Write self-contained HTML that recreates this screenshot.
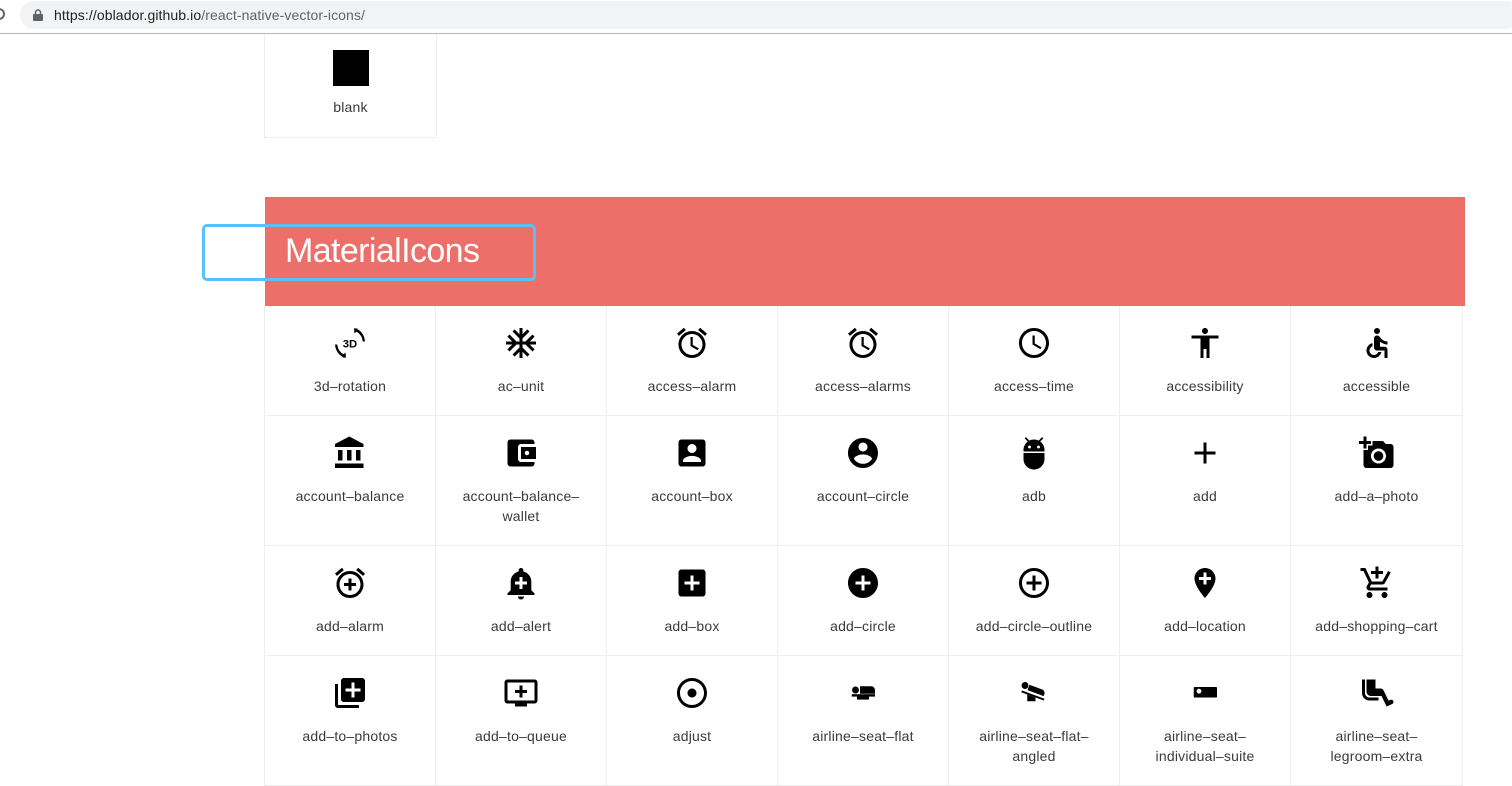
<!DOCTYPE html>
<html><head><meta charset="utf-8"><style>
*{margin:0;padding:0;box-sizing:border-box}
body{width:1512px;height:769px;overflow:hidden;background:#fff;font-family:"Liberation Sans",sans-serif;position:relative}
.bar{position:absolute;left:20px;top:1px;width:1500px;height:28px;background:#f1f3f4;border-radius:14px}
.url{position:absolute;left:54px;top:7px;font-size:14px;color:#202124;letter-spacing:0.1px}
.url span{color:#5f6368}
.line{position:absolute;left:0;top:33px;width:1512px;height:1px;background:#b4b4b4}
.c{position:absolute;border-right:1px solid #eee;border-bottom:1px solid #eee;text-align:center}
.c svg{position:absolute;left:50%;margin-left:-18px;top:19px;width:36px;height:36px}
.c .l{position:absolute;left:0;right:0;top:70px;font-size:14px;letter-spacing:0.2px;line-height:20px;color:#3a3a3a}
.hdr{position:absolute;left:265px;top:197px;width:1200px;height:109px;background:#ec6f6a}
.ttl{position:absolute;left:285px;top:232px;font-size:34px;color:#fff;letter-spacing:-0.6px}
.focus{position:absolute;left:202px;top:224px;width:334px;height:57px;border:3px solid #5bc0f8;border-radius:5px}
</style></head><body>
<div class="bar"></div>
<svg style="position:absolute;left:33px;top:9px" width="10" height="12" viewBox="0 0 10 12"><rect x="0" y="5" width="10" height="7" rx="1" fill="#5f6368"/><path d="M2.5 5V3.5a2.5 2.5 0 0 1 5 0V5" stroke="#5f6368" stroke-width="1.5" fill="none"/></svg>
<div class="url">https://oblador.github.io<span>/react-native-vector-icons/</span></div>
<div style="position:absolute;left:-3px;top:8px;width:8px;height:12px;border:2px solid #5f6368;border-left:none;border-radius:0 6px 6px 0"></div>
<div class="line"></div>

<div class="c" style="left:264px;top:34px;width:173px;height:104px;border-left:1px solid #eee">
<div style="position:absolute;left:68px;top:16px;width:36px;height:36px;background:#000"></div>
<div class="l" style="top:63px">blank</div></div>

<div class="hdr"></div>
<div class="ttl">MaterialIcons</div>
<div class="focus"></div>

<!-- row 1 -->
<div class="c" style="left:264px;top:306px;width:172px;height:110px;border-left:1px solid #eee"><svg viewBox="0 0 24 24"><path d="M7.5 21.5A10 10 0 0 1 2.05 13H3.5a8.5 8.5 0 0 0 4.2 6.6l1.3-1.3.3 3.5-3.5-.3zM16.5 2.5A10 10 0 0 1 21.95 11H20.5a8.5 8.5 0 0 0-4.2-6.6l-1.3 1.3-.3-3.5 3.5.3z" fill="#000"/><text x="12" y="15" font-size="7.5" font-weight="bold" text-anchor="middle" font-family="Liberation Sans">3D</text></svg><div class="l">3d–rotation</div></div>
<div class="c" style="left:436px;top:306px;width:171px;height:110px"><svg viewBox="0 0 24 24"><path d="M22 11h-4.17l3.24-3.24-1.41-1.42L15 11h-2V9l4.66-4.66-1.42-1.41L13 6.17V2h-2v4.17L7.76 2.93 6.34 4.34 11 9v2H9L4.34 6.34 2.93 7.76 6.17 11H2v2h4.17l-3.24 3.24 1.41 1.42L9 13h2v2l-4.66 4.66 1.42 1.41L11 17.83V22h2v-4.17l3.24 3.24 1.42-1.41L13 15v-2h2l4.66 4.66 1.41-1.42L17.83 13H22z"/></svg><div class="l">ac–unit</div></div>
<div class="c" style="left:607px;top:306px;width:171px;height:110px"><svg viewBox="0 0 24 24"><path d="M22 5.72l-4.6-3.86-1.29 1.53 4.6 3.86L22 5.72zM7.88 3.39L6.6 1.86 2 5.71l1.29 1.53 4.59-3.85zM12.5 8H11v6l4.75 2.85.75-1.23-4-2.37V8zM12 4c-4.97 0-9 4.03-9 9s4.02 9 9 9c4.97 0 9-4.03 9-9s-4.03-9-9-9zm0 16c-3.87 0-7-3.13-7-7s3.13-7 7-7 7 3.13 7 7-3.13 7-7 7z"/></svg><div class="l">access–alarm</div></div>
<div class="c" style="left:778px;top:306px;width:171px;height:110px"><svg viewBox="0 0 24 24"><path d="M22 5.72l-4.6-3.86-1.29 1.53 4.6 3.86L22 5.72zM7.88 3.39L6.6 1.86 2 5.71l1.29 1.53 4.59-3.85zM12.5 8H11v6l4.75 2.85.75-1.23-4-2.37V8zM12 4c-4.97 0-9 4.03-9 9s4.02 9 9 9c4.97 0 9-4.03 9-9s-4.03-9-9-9zm0 16c-3.87 0-7-3.13-7-7s3.13-7 7-7 7 3.13 7 7-3.13 7-7 7z"/></svg><div class="l">access–alarms</div></div>
<div class="c" style="left:949px;top:306px;width:171px;height:110px"><svg viewBox="0 0 24 24"><path d="M11.99 2C6.47 2 2 6.48 2 12s4.47 10 9.99 10C17.52 22 22 17.52 22 12S17.52 2 11.99 2zM12 20c-4.42 0-8-3.58-8-8s3.58-8 8-8 8 3.58 8 8-3.58 8-8 8zm.5-13H11v6l5.25 3.15.75-1.23-4.5-2.67z"/></svg><div class="l">access–time</div></div>
<div class="c" style="left:1120px;top:306px;width:171px;height:110px"><svg viewBox="0 0 24 24"><path d="M12 2c1.1 0 2 .9 2 2s-.9 2-2 2-2-.9-2-2 .9-2 2-2zm9 7h-6v13h-2v-6h-2v6H9V9H3V7h18v2z"/></svg><div class="l">accessibility</div></div>
<div class="c" style="left:1291px;top:306px;width:172px;height:110px"><svg viewBox="0 0 24 24"><circle cx="12" cy="4" r="2"/><path d="M19 13v-2c-1.54.02-3.090-.75-4.07-1.83l-1.29-1.43c-.17-.19-.38-.34-.61-.45H13c-.35-.2-.75-.3-1.19-.26C10.76 7.11 10 8.04 10 9.09V15c0 1.1.9 2 2 2h5v5h2v-5.5c0-1.1-.9-2-2-2h-3v-3.45c1.29 1.07 3.25 1.94 5 1.95zm-6.17 5c-.41 1.16-1.52 2-2.83 2-1.66 0-3-1.34-3-3 0-1.31.84-2.41 2-2.83V12.1c-2.28.46-4 2.48-4 4.9 0 2.76 2.24 5 5 5 2.42 0 4.44-1.72 4.9-4h-2.07z"/></svg><div class="l">accessible</div></div>

<!-- row 2 -->
<div class="c" style="left:264px;top:416px;width:172px;height:130px;border-left:1px solid #eee"><svg viewBox="0 0 24 24"><path d="M4 10v7h3v-7H4zm6 0v7h3v-7h-3zM2 22h19v-3H2v3zm14-12v7h3v-7h-3zm-4.5-9L2 6v2h19V6l-9.5-5z"/></svg><div class="l">account–balance</div></div>
<div class="c" style="left:436px;top:416px;width:171px;height:130px"><svg viewBox="0 0 24 24"><path d="M21 18v1c0 1.1-.9 2-2 2H5c-1.11 0-2-.9-2-2V5c0-1.1.89-2 2-2h14c1.1 0 2 .9 2 2v1h-9c-1.11 0-2 .9-2 2v8c0 1.1.89 2 2 2h9zm-9-2h10V8H12v8zm4-2.5c-.83 0-1.5-.67-1.5-1.5s.67-1.5 1.5-1.5 1.5.67 1.5 1.5-.67 1.5-1.5 1.5z"/></svg><div class="l">account–balance–<br>wallet</div></div>
<div class="c" style="left:607px;top:416px;width:171px;height:130px"><svg viewBox="0 0 24 24"><path d="M3 5v14c0 1.1.89 2 2 2h14c1.1 0 2-.9 2-2V5c0-1.1-.9-2-2-2H5c-1.11 0-2 .9-2 2zm12 4c0 1.66-1.34 3-3 3s-3-1.34-3-3 1.34-3 3-3 3 1.34 3 3zm-9 8c0-2 4-3.1 6-3.1s6 1.1 6 3.1v1H6v-1z"/></svg><div class="l">account–box</div></div>
<div class="c" style="left:778px;top:416px;width:171px;height:130px"><svg viewBox="0 0 24 24"><path d="M12 2C6.48 2 2 6.48 2 12s4.48 10 10 10 10-4.48 10-10S17.52 2 12 2zm0 3c1.66 0 3 1.34 3 3s-1.34 3-3 3-3-1.34-3-3 1.34-3 3-3zm0 14.2c-2.5 0-4.71-1.28-6-3.22.03-1.99 4-3.08 6-3.08 1.99 0 5.97 1.09 6 3.08-1.29 1.94-3.5 3.22-6 3.22z"/></svg><div class="l">account–circle</div></div>
<div class="c" style="left:949px;top:416px;width:171px;height:130px"><svg viewBox="0 0 24 24"><path d="M5 16c0 3.87 3.13 7 7 7s7-3.13 7-7v-4H5v4zM16.12 4.37l2.1-2.1-.82-.83-2.3 2.31C14.16 3.28 13.12 3 12 3s-2.16.28-3.09.75L6.6 1.44l-.82.83 2.1 2.1C6.14 5.64 5 7.68 5 10v1h14v-1c0-2.32-1.14-4.36-2.88-5.63zM9 9c-.55 0-1-.45-1-1s.45-1 1-1 1 .45 1 1-.45 1-1 1zm6 0c-.55 0-1-.45-1-1s.45-1 1-1 1 .45 1 1-.45 1-1 1z"/></svg><div class="l">adb</div></div>
<div class="c" style="left:1120px;top:416px;width:171px;height:130px"><svg viewBox="0 0 24 24"><path d="M19 13h-6v6h-2v-6H5v-2h6V5h2v6h6v2z"/></svg><div class="l">add</div></div>
<div class="c" style="left:1291px;top:416px;width:172px;height:130px"><svg viewBox="0 0 24 24"><path d="M3 4V1h2v3h3v2H5v3H3V6H0V4h3zm3 6V7h3V4h7l1.83 2H21c1.1 0 2 .9 2 2v12c0 1.1-.9 2-2 2H5c-1.1 0-2-.9-2-2V10h3zm7 9c2.76 0 5-2.24 5-5s-2.24-5-5-5-5 2.24-5 5 2.24 5 5 5zm-3.2-5c0 1.77 1.43 3.2 3.2 3.2s3.2-1.43 3.2-3.2-1.43-3.2-3.2-3.2-3.2 1.43-3.2 3.2z"/></svg><div class="l">add–a–photo</div></div>

<!-- row 3 -->
<div class="c" style="left:264px;top:546px;width:172px;height:110px;border-left:1px solid #eee"><svg viewBox="0 0 24 24"><path d="M7.88 3.39L6.6 1.86 2 5.71l1.29 1.53 4.59-3.85zM22 5.72l-4.6-3.86-1.29 1.53 4.6 3.86L22 5.72zM12 4c-4.97 0-9 4.03-9 9s4.02 9 9 9c4.97 0 9-4.03 9-9s-4.03-9-9-9zm0 16c-3.87 0-7-3.13-7-7s3.13-7 7-7 7 3.13 7 7-3.13 7-7 7zm1-11h-2v3H8v2h3v3h2v-3h3v-2h-3V9z"/></svg><div class="l">add–alarm</div></div>
<div class="c" style="left:436px;top:546px;width:171px;height:110px"><svg viewBox="0 0 24 24"><path d="M10.01 21.01c0 1.1.89 1.99 1.99 1.99s1.99-.89 1.99-1.99h-3.98zm8.87-4.19V11c0-3.25-2.25-5.97-5.29-6.69v-.72C13.59 2.71 12.88 2 12 2s-1.59.71-1.59 1.59v.72C7.37 5.03 5.12 7.75 5.12 11v5.82L3 18.94V20h18v-1.06l-2.12-2.12zM16 13.01h-3v3h-2v-3H8V11h3V8h2v3h3v2.01z"/></svg><div class="l">add–alert</div></div>
<div class="c" style="left:607px;top:546px;width:171px;height:110px"><svg viewBox="0 0 24 24"><path d="M19 3H5c-1.11 0-2 .9-2 2v14c0 1.1.89 2 2 2h14c1.1 0 2-.9 2-2V5c0-1.1-.9-2-2-2zm-2 10h-4v4h-2v-4H7v-2h4V7h2v4h4v2z"/></svg><div class="l">add–box</div></div>
<div class="c" style="left:778px;top:546px;width:171px;height:110px"><svg viewBox="0 0 24 24"><path d="M12 2C6.48 2 2 6.48 2 12s4.48 10 10 10 10-4.48 10-10S17.52 2 12 2zm5 11h-4v4h-2v-4H7v-2h4V7h2v4h4v2z"/></svg><div class="l">add–circle</div></div>
<div class="c" style="left:949px;top:546px;width:171px;height:110px"><svg viewBox="0 0 24 24"><path d="M13 7h-2v4H7v2h4v4h2v-4h4v-2h-4V7zm-1-5C6.48 2 2 6.48 2 12s4.48 10 10 10 10-4.48 10-10S17.52 2 12 2zm0 18c-4.41 0-8-3.59-8-8s3.59-8 8-8 8 3.59 8 8-3.59 8-8 8z"/></svg><div class="l">add–circle–outline</div></div>
<div class="c" style="left:1120px;top:546px;width:171px;height:110px"><svg viewBox="0 0 24 24"><path d="M12 2C8.14 2 5 5.14 5 9c0 5.25 7 13 7 13s7-7.75 7-13c0-3.86-3.14-7-7-7zm4 8h-3v3h-2v-3H8V8h3V5h2v3h3v2z"/></svg><div class="l">add–location</div></div>
<div class="c" style="left:1291px;top:546px;width:172px;height:110px"><svg viewBox="0 0 24 24"><path d="M11 9h2V6h3V4h-3V1h-2v3H8v2h3v3zm-4 9c-1.1 0-1.99.9-1.99 2S5.9 22 7 22s2-.9 2-2-.9-2-2-2zm10 0c-1.1 0-1.99.9-1.99 2s.89 2 1.99 2 2-.9 2-2-.9-2-2-2zm-9.83-3.25l.03-.12.9-1.63h7.45c.75 0 1.41-.41 1.75-1.03l3.86-7.01L19.42 4h-.01l-1.1 2-2.76 5H8.53l-.13-.27L6.16 6l-.95-2-.94-2H1v2h2l3.6 7.59-1.35 2.45c-.16.28-.25.61-.25.96 0 1.1.9 2 2 2h12v-2H7.42c-.13 0-.25-.11-.25-.25z"/></svg><div class="l">add–shopping–cart</div></div>

<!-- row 4 -->
<div class="c" style="left:264px;top:656px;width:172px;height:130px;border-left:1px solid #eee"><svg viewBox="0 0 24 24"><path d="M4 6H2v14c0 1.1.9 2 2 2h14v-2H4V6zm16-4H8c-1.1 0-2 .9-2 2v12c0 1.1.9 2 2 2h12c1.1 0 2-.9 2-2V4c0-1.1-.9-2-2-2zm-1 9h-4v4h-2v-4H9V9h4V5h2v4h4v2z"/></svg><div class="l">add–to–photos</div></div>
<div class="c" style="left:436px;top:656px;width:171px;height:130px"><svg viewBox="0 0 24 24"><path d="M21 3H3c-1.11 0-2 .89-2 2v12c0 1.1.89 2 2 2h5v2h8v-2h5c1.1 0 1.99-.9 1.99-2L23 5c0-1.11-.9-2-2-2zm0 14H3V5h18v12zm-5-7v2h-3v3h-2v-3H8v-2h3V7h2v3h3z"/></svg><div class="l">add–to–queue</div></div>
<div class="c" style="left:607px;top:656px;width:171px;height:130px"><svg viewBox="0 0 24 24"><path d="M12 2C6.49 2 2 6.49 2 12s4.49 10 10 10 10-4.49 10-10S17.51 2 12 2zm0 18c-4.41 0-8-3.59-8-8s3.59-8 8-8 8 3.59 8 8-3.59 8-8 8zm3-8c0 1.66-1.34 3-3 3s-3-1.34-3-3 1.34-3 3-3 3 1.34 3 3z"/></svg><div class="l">adjust</div></div>
<div class="c" style="left:778px;top:656px;width:171px;height:130px"><svg viewBox="0 0 24 24"><circle cx="7" cy="10" r="2.3"/><path d="M10 7.5h7.5a2.5 2.5 0 0 1 2.5 2.5V12.5H10z"/><rect x="4.5" y="12.8" width="15.5" height="1.6"/><rect x="8" y="14.2" width="8" height="2.2"/></svg><div class="l">airline–seat–flat</div></div>
<div class="c" style="left:949px;top:656px;width:171px;height:130px"><svg viewBox="0 0 24 24"><circle cx="6" cy="7" r="2.3"/><path d="M9 6.5l8.5 3.2a2.4 2.4 0 0 1 1.4 3.1l-.5 1.3-10.7-4z"/><path d="M4 10.3l15 5.5-.5 1.2L3.5 11.5z"/><path d="M7.5 13l5.5 2v2.5H7.5z"/></svg><div class="l">airline–seat–flat–<br>angled</div></div>
<div class="c" style="left:1120px;top:656px;width:171px;height:130px"><svg viewBox="0 0 24 24"><rect x="4.5" y="8" width="15.5" height="7" rx=".6"/><circle cx="8" cy="10.8" r="1.6" fill="#fff"/><rect x="6" y="9.2" width="0.8" height="4.5" fill="#fff" opacity="0"/></svg><div class="l">airline–seat–<br>individual–suite</div></div>
<div class="c" style="left:1291px;top:656px;width:172px;height:130px"><svg viewBox="0 0 24 24"><path d="M4 12V3H2v9c0 2.76 2.24 5 5 5h6v-2H7c-1.66 0-3-1.34-3-3zm18.83 5.24c-.38-.72-1.29-.97-2.03-.63l-1.09.5-3.41-6.98c-.34-.68-1.03-1.12-1.79-1.12L11 9V3H5v8c0 1.66 1.34 3 3 3h7l3.41 7 3.72-1.7c.77-.36 1.1-1.3.7-2.06z"/></svg><div class="l">airline–seat–<br>legroom–extra</div></div>
</body></html>
